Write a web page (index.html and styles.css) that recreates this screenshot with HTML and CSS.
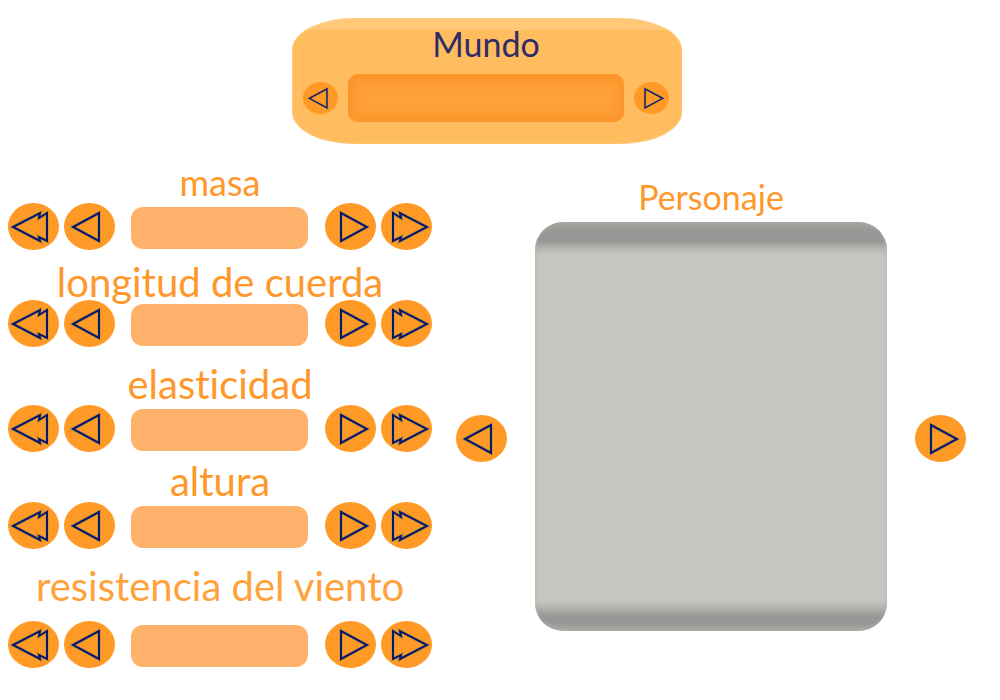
FILE: index.html
```html
<!DOCTYPE html>
<html lang="es">
<head>
<meta charset="utf-8">
<meta name="viewport" content="width=device-width, initial-scale=1">
<title>Mundo</title>
<link rel="stylesheet" href="styles.css">
</head>
<body>
<svg class="symbols" aria-hidden="true">
  <symbol id="prev" viewBox="0 0 51 47"><path class="edge" d="M9 24 35 10V38Z"/><path class="line" d="M9 24 35 10V38Z"/></symbol>
  <symbol id="next" viewBox="0 0 51 47"><path class="edge" d="M16 10V38L42 24Z"/><path class="line" d="M16 10V38L42 24Z"/></symbol>
  <symbol id="first" viewBox="0 0 51 47"><path class="edge" d="M5 24 32 10 31 15 39 10V38L31 34 32 38Z"/><path class="line" d="M5 24 32 10 31 15 39 10V38L31 34 32 38Z"/></symbol>
  <symbol id="last" viewBox="0 0 51 47"><path class="edge" d="M12 10V38L20 34 19 38 46 24 19 10 20 15Z"/><path class="line" d="M12 10V38L20 34 19 38 46 24 19 10 20 15Z"/></symbol>
</svg>
<div class="page">
  <header class="world">
    <label class="world-title" for="mundo">Mundo</label>
    <div class="world-controls">
      <button class="round small" type="button" aria-label="Mundo anterior"><svg><use href="#prev"/></svg></button>
      <input class="world-field" id="mundo" type="text">
      <button class="round small" type="button" aria-label="Mundo siguiente"><svg><use href="#next"/></svg></button>
    </div>
  </header>
  <main class="columns">
    <form class="settings">
      <div class="setting mass">
        <label class="title" for="masa">masa</label>
        <div class="controls">
          <button class="round" type="button" aria-label="Masa mínima"><svg><use href="#first"/></svg></button>
          <button class="round" type="button" aria-label="Menos masa"><svg><use href="#prev"/></svg></button>
          <input class="field" id="masa" type="text">
          <button class="round" type="button" aria-label="Más masa"><svg><use href="#next"/></svg></button>
          <button class="round" type="button" aria-label="Masa máxima"><svg><use href="#last"/></svg></button>
        </div>
      </div>
      <div class="setting rope">
        <label class="title" for="longitud">longitud de cuerda</label>
        <div class="controls">
          <button class="round" type="button" aria-label="Longitud mínima"><svg><use href="#first"/></svg></button>
          <button class="round" type="button" aria-label="Menos longitud"><svg><use href="#prev"/></svg></button>
          <input class="field" id="longitud" type="text">
          <button class="round" type="button" aria-label="Más longitud"><svg><use href="#next"/></svg></button>
          <button class="round" type="button" aria-label="Longitud máxima"><svg><use href="#last"/></svg></button>
        </div>
      </div>
      <div class="setting elasticity">
        <label class="title" for="elasticidad">elasticidad</label>
        <div class="controls">
          <button class="round" type="button" aria-label="Elasticidad mínima"><svg><use href="#first"/></svg></button>
          <button class="round" type="button" aria-label="Menos elasticidad"><svg><use href="#prev"/></svg></button>
          <input class="field" id="elasticidad" type="text">
          <button class="round" type="button" aria-label="Más elasticidad"><svg><use href="#next"/></svg></button>
          <button class="round" type="button" aria-label="Elasticidad máxima"><svg><use href="#last"/></svg></button>
        </div>
      </div>
      <div class="setting height">
        <label class="title" for="altura">altura</label>
        <div class="controls">
          <button class="round" type="button" aria-label="Altura mínima"><svg><use href="#first"/></svg></button>
          <button class="round" type="button" aria-label="Menos altura"><svg><use href="#prev"/></svg></button>
          <input class="field" id="altura" type="text">
          <button class="round" type="button" aria-label="Más altura"><svg><use href="#next"/></svg></button>
          <button class="round" type="button" aria-label="Altura máxima"><svg><use href="#last"/></svg></button>
        </div>
      </div>
      <div class="setting wind">
        <label class="title" for="viento">resistencia del viento</label>
        <div class="controls">
          <button class="round" type="button" aria-label="Resistencia mínima"><svg><use href="#first"/></svg></button>
          <button class="round" type="button" aria-label="Menos resistencia"><svg><use href="#prev"/></svg></button>
          <input class="field" id="viento" type="text">
          <button class="round" type="button" aria-label="Más resistencia"><svg><use href="#next"/></svg></button>
          <button class="round" type="button" aria-label="Resistencia máxima"><svg><use href="#last"/></svg></button>
        </div>
      </div>
    </form>
    <section class="character">
      <h2 class="character-title">Personaje</h2>
      <div class="picker">
        <button class="round" type="button" aria-label="Personaje anterior"><svg><use href="#prev"/></svg></button>
        <div class="screen"></div>
        <button class="round" type="button" aria-label="Personaje siguiente"><svg><use href="#next"/></svg></button>
      </div>
    </section>
  </main>
</div>
</body>
</html>
```
FILE: styles.css
```css
* { box-sizing: border-box; }

body {
  margin: 0;
  background: #fff;
  font-family: Lato, sans-serif;
  font-variant-ligatures: none;
  color: #ff982b;
}

.symbols {
  position: absolute;
  width: 0;
  height: 0;
}

.edge {
  fill: none;
  stroke: #d09a2c;
  stroke-width: 4;
}

.line {
  fill: none;
  stroke: #0c1470;
  stroke-width: 2;
}

.page { padding: 18px 34px 24px 8px; }

.world {
  max-width: 390px;
  margin: 0 auto;
  padding: 8px 13px 22px 11px;
  border-radius: 62px / 32px;
  background: linear-gradient(#ffc878 12px, #ffbd60 12px);
  box-shadow: inset 0 0 2px #ffd9a0;
}

.world-title {
  display: block;
  font-size: 34px;
  line-height: 36px;
  text-align: center;
  color: #2f2c68;
}

.world-controls {
  display: flex;
  align-items: center;
  gap: 10px;
  margin-top: 12px;
}

.world-field {
  flex: 1;
  min-width: 0;
  height: 48px;
  padding: 0 14px;
  border: 0;
  border-radius: 10px;
  background: #ffa03a;
  box-shadow: inset 0 0 8px 8px #fc962b;
  font: inherit;
  font-size: 24px;
}

.round {
  flex: none;
  width: 51px;
  height: 47px;
  padding: 0;
  border: 0;
  border-radius: 50%;
  background: #ff9a27;
  cursor: pointer;
}

.round svg {
  display: block;
  width: 100%;
  height: 100%;
}

.small {
  width: 35px;
  height: 32px;
}

.columns {
  display: grid;
  grid-template-columns: minmax(0, 424fr) minmax(0, 510fr);
  gap: 24px;
  margin-top: 20px;
}

.title {
  display: block;
  margin-bottom: 3px;
  font-size: 40px;
  line-height: 36px;
  text-align: center;
  white-space: nowrap;
}

.mass .title { font-size: 36px; }

.controls {
  display: flex;
  align-items: center;
  gap: 5px;
}

.field {
  flex: 1;
  min-width: 0;
  height: 42px;
  margin: 2px 12px 0 11px;
  padding: 0 14px;
  border: 0;
  border-radius: 12px;
  background: #ffb26b;
  font: inherit;
  font-size: 24px;
}

.rope { margin-top: 14px; }
.rope .title { margin-bottom: 0; }
.elasticity { margin-top: 19px; }
.height { margin-top: 11px; }
.wind { margin-top: 19px; color: #ffa23c; }
.wind .title { margin-bottom: 17px; }

.character { padding-top: 17px; }

.character-title {
  margin: 0 0 9px;
  font-size: 34px;
  font-weight: 400;
  line-height: 32px;
  text-align: center;
}

.picker {
  display: flex;
  align-items: center;
  gap: 28px;
}

.picker .round { margin-top: 24px; }

.screen {
  flex: 1;
  height: 409px;
  border-radius: 28px;
  background: linear-gradient(#a3a29f, #969593 12px, #979694 19px, #bbb9b5 28px, #c8c6c1 33px, #c8c6c1 378px, #bbb9b5 384px, #979694 394px, #979694 400px, #aaa9a4);
  box-shadow: inset 0 0 4px #b0afaa;
}
```
